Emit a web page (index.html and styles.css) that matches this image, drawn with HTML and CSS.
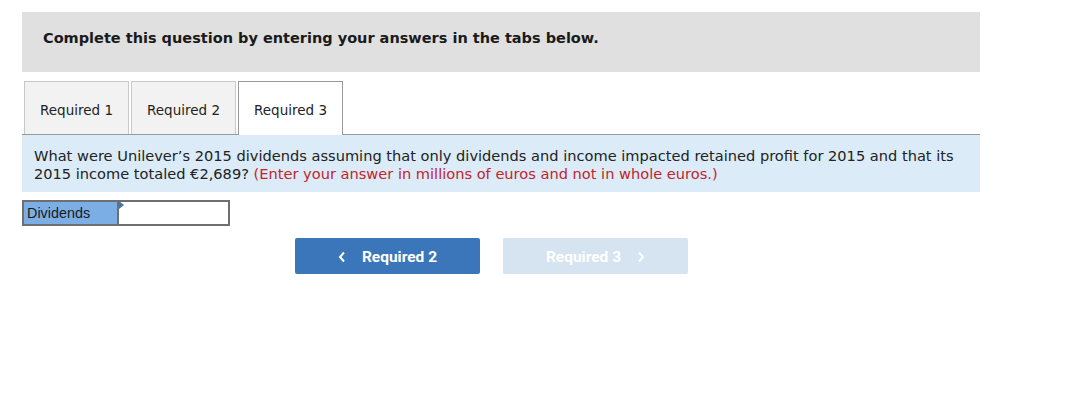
FILE: index.html
```html
<!DOCTYPE html>
<html>
<head>
<meta charset="utf-8">
<link rel="stylesheet" href="styles.css">
</head>
<body>
<div class="page">
  <div class="header">Complete this question by entering your answers in the tabs below.</div>
  <div class="tabs">
    <div class="tab">Required 1</div>
    <div class="tab">Required 2</div>
    <div class="tab active">Required 3</div>
  </div>
  <div class="question">What were Unilever’s 2015 dividends assuming that only dividends and income impacted retained profit for 2015 and that its 2015 income totaled €2,689? <span class="red">(Enter your answer in millions of euros and not in whole euros.)</span></div>
  <div class="answer">
    <div class="label">Dividends</div>
    <div class="input"><span class="flag"></span></div>
  </div>
  <div class="nav">
    <div class="btn prev"><svg class="chev left" width="8" height="12" viewBox="0 0 8 12"><path d="M6 1.5 L2 6 L6 10.5" fill="none" stroke="#fff" stroke-width="2"/></svg>Required 2</div>
    <div class="btn next">Required 3<svg class="chev right" width="8" height="12" viewBox="0 0 8 12"><path d="M2 1.5 L6 6 L2 10.5" fill="none" stroke="#fff" stroke-width="2"/></svg></div>
  </div>
</div>
</body>
</html>
```
FILE: styles.css
```css
body {
  margin: 0;
  background: #fff;
  font-family: "DejaVu Sans", Verdana, sans-serif;
  color: #222;
}
.page {
  padding: 12px 0 0 22px;
  width: 958px;
}
.header {
  background: #e0e0e0;
  height: 60px;
  box-sizing: border-box;
  padding: 18px 0 0 21px;
  font-weight: bold;
  font-size: 14.5px;
  color: #1a1a1a;
}
.tabs {
  display: flex;
  align-items: flex-start;
  gap: 2px;
  margin-top: 9px;
  padding-left: 2px;
  border-bottom: 1px solid #999;
  height: 53px;
}
.tab {
  width: 105px;
  height: 53px;
  box-sizing: border-box;
  padding-top: 3px;
  border: 1px solid #c8c8c8;
  border-bottom: none;
  background: #f2f2f2;
  font-size: 13.5px;
  display: flex;
  align-items: center;
  justify-content: center;
  color: #222;
}
.tab.active {
  background: #fff;
  border-color: #999;
  height: 54px;
  padding-bottom: 1px;
  position: relative;
  z-index: 1;
}
.question {
  background: #dbebf8;
  padding: 12px 20px 8px 12px;
  font-size: 14.6px;
  line-height: 18px;
  height: 57px;
  box-sizing: border-box;
  color: #222;
}
.red { color: #c4232b; }
.answer {
  display: flex;
  margin-top: 8px;
  height: 26px;
  width: 208px;
}
.label {
  width: 96px;
  box-sizing: border-box;
  background: #7aaee4;
  border: 2px solid #6f6f6f;
  border-right: 1px solid #6f6f6f;
  font-family: "Liberation Sans", Arial, sans-serif;
  font-size: 14.4px;
  padding: 3px 0 0 3px;
  color: #1a1a1a;
}
.input {
  flex: 1;
  box-sizing: border-box;
  border: 2px solid #6f6f6f;
  border-left: 1px solid #6f6f6f;
  background: #fff;
  position: relative;
}
.flag {
  position: absolute;
  left: 0;
  top: -1px;
  width: 0;
  height: 0;
  border-top: 4px solid transparent;
  border-bottom: 4px solid transparent;
  border-left: 5px solid #3a76b9;
}
.nav {
  display: flex;
  gap: 23px;
  margin: 12px 0 0 273px;
}
.btn {
  width: 185px;
  height: 36px;
  border-radius: 2px;
  display: flex;
  align-items: center;
  justify-content: center;
  padding-top: 1px;
  box-sizing: border-box;
  font-family: Roboto, "Liberation Sans", sans-serif;
  font-weight: bold;
  font-size: 15.5px;
  color: #fff;
}
.prev { background: #3a76b9; }
.next { background: #d6e3f1; }
.chev { display: block; }
.chev.left { margin-right: 16px; }
.chev.right { margin-left: 16px; }
```
